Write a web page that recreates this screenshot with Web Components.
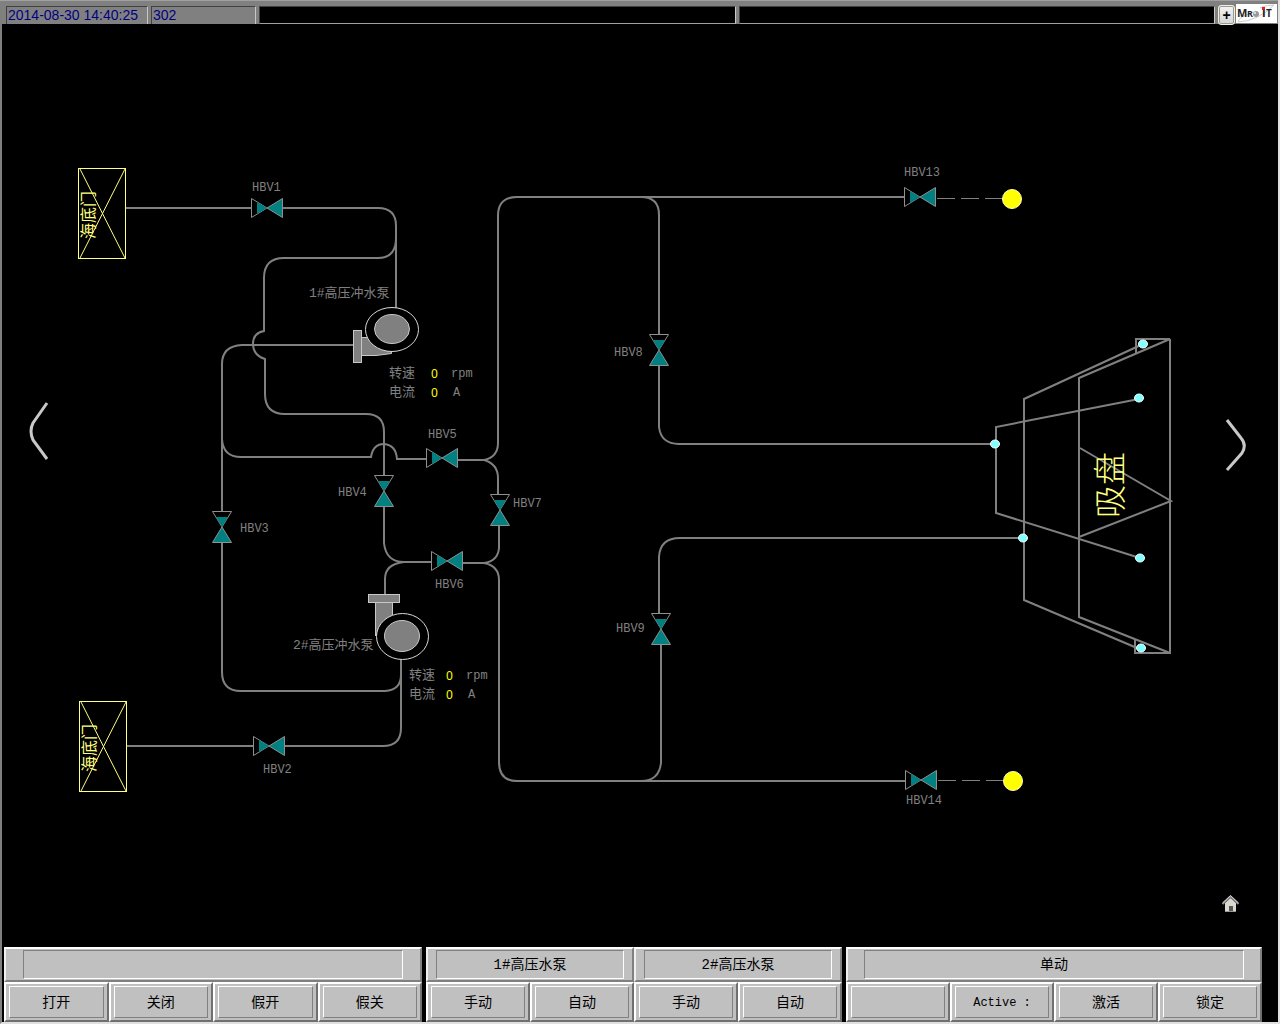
<!DOCTYPE html>
<html lang="zh-CN">
<head>
<meta charset="utf-8">
<title>高压冲水系统</title>
<style>
  html, body { margin: 0; height: 100%; background: #000; }
  body { font-family: "Liberation Mono", "Noto Sans CJK SC", monospace; font-size: 12px; }
</style>
</head>
<body>
<hmi-screen>
  <status-bar slot="top" time="2014-08-30 14:40:25" page="302"></status-bar>

  <mimic-canvas>
    <sea-chest x="78" y="168">海底门</sea-chest>
    <sea-chest x="79" y="701">海底门</sea-chest>

    <flow-valve x="267" y="208"></flow-valve>
    <flow-valve x="269" y="746"></flow-valve>
    <flow-valve x="222" y="527" vertical></flow-valve>
    <flow-valve x="384" y="491" vertical></flow-valve>
    <flow-valve x="442" y="458"></flow-valve>
    <flow-valve x="447" y="561"></flow-valve>
    <flow-valve x="500" y="510" vertical></flow-valve>
    <flow-valve x="659" y="350" vertical></flow-valve>
    <flow-valve x="661" y="629" vertical></flow-valve>
    <flow-valve x="920" y="197"></flow-valve>
    <flow-valve x="921" y="780"></flow-valve>

    <tag-label x="252" y="188">HBV1</tag-label>
    <tag-label x="263" y="770">HBV2</tag-label>
    <tag-label x="240" y="529">HBV3</tag-label>
    <tag-label x="338" y="493">HBV4</tag-label>
    <tag-label x="428" y="435">HBV5</tag-label>
    <tag-label x="435" y="585">HBV6</tag-label>
    <tag-label x="513" y="504">HBV7</tag-label>
    <tag-label x="614" y="353">HBV8</tag-label>
    <tag-label x="616" y="629">HBV9</tag-label>
    <tag-label x="904" y="173">HBV13</tag-label>
    <tag-label x="906" y="801">HBV14</tag-label>

    <tag-label x="309" y="294" kind="name">1#高压冲水泵</tag-label>
    <tag-label x="293" y="646" kind="name">2#高压冲水泵</tag-label>
    <pump-readout x="389" y="364" speed="0" current="0"></pump-readout>
    <pump-readout x="409" y="666" speed="0" current="0" tight></pump-readout>

    <tag-label x="1075" y="485" kind="suction">吸盘</tag-label>

    <nav-button x="28" y="401" label="上一页">
      <svg width="22" height="60"><path d="M19 2 L5 22 Q1 30 5 39 L19 58"/></svg>
    </nav-button>
    <nav-button x="1225" y="417" label="下一页">
      <svg width="22" height="56"><path d="M2 3 L16 21 Q22 28 17 36 L2 53"/></svg>
    </nav-button>
    <nav-button x="1221" y="894" label="主页">
      <svg width="19" height="19" viewBox="0 0 19 19">
        <path d="M4 9L9.500 4L15 9V18H4Z" fill="#dcd7d1" stroke="none"/>
        <path d="M1.500 10L9.500 2.500L17.500 10" stroke="#8a8a8a" stroke-width="2"/>
        <path d="M1.500 9L9.500 1.500L17.500 9" stroke="#d8d8d8" stroke-width="1"/>
        <rect x="8" y="12" width="4" height="6" fill="#5c5652" stroke="none"/>
        <rect x="4" y="17" width="11" height="1" fill="#999" stroke="none"/>
      </svg>
    </nav-button>
  </mimic-canvas>

  <control-deck slot="bottom">
    <control-group>
      <group-title slot="title"></group-title>
      <key-button>打开</key-button><key-button>关闭</key-button><key-button>假开</key-button><key-button>假关</key-button>
    </control-group>
    <control-group>
      <group-title slot="title">1#高压水泵</group-title><group-title slot="title">2#高压水泵</group-title>
      <key-button>手动</key-button><key-button>自动</key-button><key-button>手动</key-button><key-button>自动</key-button>
    </control-group>
    <control-group>
      <group-title slot="title">单动</group-title>
      <key-button></key-button><key-button small>Active :</key-button><key-button>激活</key-button><key-button>锁定</key-button>
    </control-group>
  </control-deck>
</hmi-screen>

<script>
  class Base extends HTMLElement {
    connectedCallback() {
      if (this.shadowRoot) return;
      const root = this.attachShadow({ mode: "open" });
      const t = document.createElement("template");
      t.innerHTML = this.render();
      root.append(t.content.cloneNode(true));
      if (this.hasAttribute("x")) {
        this.style.setProperty("--x", this.getAttribute("x"));
        this.style.setProperty("--y", this.getAttribute("y"));
      }
    }
  }
  // Nodes on the mimic share one coordinate system; its origin is (2, 24).
  const NODE = `position:absolute; left:calc((var(--x) - 2) * 1px); top:calc((var(--y) - 24) * 1px);`;

  customElements.define("hmi-screen", class extends Base {
    render() { return `
      <style>
        :host { display:flex; flex-direction:column; min-height:100vh; box-sizing:border-box;
          border-style:solid; border-width:0 2px 2px; border-color:#000 #e0e0e0 #e0e0e0 #808080; background:#000; }
        main { flex:1; display:flex; justify-content:center; overflow:hidden; }
      </style>
      <slot name="top"></slot><main><slot></slot></main><slot name="bottom"></slot>`; }
  });

  customElements.define("status-bar", class extends Base {
    render() { return `
      <style>
        :host { display:flex; gap:3px; height:24px; box-sizing:border-box; margin-left:-2px;
          padding:5px 1px 0 6px; background:#808080; border-top:1px solid #a0a0a0;
          font:14px/17px "Liberation Sans", sans-serif; color:#000080; }
        .cell { box-sizing:border-box; border-style:solid; border-width:1px 1px 0; border-color:#404040 #c8c8c8 #c8c8c8 #404040;
          padding-left:1px; white-space:nowrap; }
        .time { width:142px; }
        .page { width:105px; }
        .line { flex:1; background:#000; border-bottom:1px solid #a0a0a0; }
        button { width:17px; height:20px; margin-top:-1px; padding:0; border:1px solid #f4f0d8; border-radius:3px;
          background:linear-gradient(#f4f4f4,#d4d4d4); box-shadow:inset 0 0 0 1px #999; color:#000; font:bold 14px/16px "Liberation Sans", sans-serif; }
        svg { display:block; margin:-2px 0 0 -2px; }
      </style>
      <div class="cell time">${this.getAttribute("time")}</div>
      <div class="cell page">${this.getAttribute("page")}</div>
      <div class="cell line"></div>
      <div class="cell line"></div>
      <button type="button">+</button>
      <svg width="41" height="20" font-family="Open Sans" font-weight="bold">
        <rect width="41" height="19" fill="#fff"/>
        <path d="M2 18Q3 13 13 10M2 18Q22 17 38 1Q30 1 24 4" fill="none" stroke="#ccc"/>
        <text x="1" y="13" font-size="11" fill="#222">M</text>
        <text x="11" y="13" font-size="9" fill="#222">R</text>
        <circle cx="20" cy="10" r="3" fill="#999"/><circle cx="19" cy="9" r="1" fill="#eee"/>
        <text x="26" y="13" font-size="12" fill="#222">i</text>
        <rect x="26" y="3" width="3" height="3" fill="#e02020"/>
        <text x="30" y="13" font-size="10" fill="#222">T</text>
      </svg>`; }
  });

  customElements.define("mimic-canvas", class extends Base {
    render() {
      const dots = [[1143,344],[1139,398],[995,444],[1023,538],[1140,558],[1141,648]]
        .map(([x, y]) => `<ellipse cx="${x}" cy="${y}" rx="4.500" ry="4"/>`).join("");
      return `
      <style>
        :host { display:block; position:relative; flex:none; width:1276px; height:923px; }
        svg { display:block; width:100%; height:100%; }
        .pipe { fill:none; stroke:#808080; stroke-width:2; }
        .thin { fill:none; stroke:#808080; stroke-width:1; stroke-dasharray:18 6; }
        .body { fill:#808080; stroke:#c8c8c8; }
        .ring { fill:#000; stroke:#d8d8d8; }
        .dots { fill:#80ffff; stroke:#fff; }
        .lamp { fill:#ff0; stroke:#ffffb0; }
      </style>
      <svg viewBox="2 24 1276 923" aria-hidden="true">
        <g class="pipe">
          <path d="M126 208H251 M283 208H378Q396 208 396 226V308"/>
          <path d="M396 238Q396 258 378 258H284Q264 258 264 278V331Q253 333 253 344Q253 355 265 359V394Q265 414 285 414H366Q384 414 384 432V475"/>
          <path d="M353 345H242Q222 346 222 364V511 M222 541V672Q222 691 241 691H385Q401 690 401 675"/>
          <path d="M401 658V728Q401 746 383 746H285 M253 746H127"/>
          <path d="M222 439Q223 457 241 457H371Q373 444 384 444Q396 445 397 459H426"/>
          <path d="M458 460H484Q498 457 498 443V216Q498 197 517 197H904 M484 460Q498 464 498 478V494"/>
          <path d="M499 525V548Q498 561 484 563H463 M484 563Q499 566 499 580V762Q499 781 517 781H905"/>
          <path d="M384 506V543Q386 562 404 562H431 M404 562Q385 564 385 579V594"/>
          <path d="M641 197Q659 197 659 215V334 M659 364V427Q661 444 679 444H991"/>
          <path d="M661 644V763Q659 781 641 781 M660 613H659V557Q660 538 680 538H1019"/>
          <path d="M1170 339V653H1135V640 M1136 353V339H1170L1079 378V617L1170 653"/>
          <path d="M1143 344L1024 399V600L1137 648"/>
          <path d="M1139 399L996 427V513L1140 558"/>
          <path d="M1080 448L1171 501L1079 537"/>
        </g>
        <path class="thin" d="M937 198.500H1003 M938 780.500H1004"/>
        <circle class="lamp" cx="1012" cy="199" r="9.500"/>
        <circle class="lamp" cx="1013" cy="781" r="9.500"/>
        <g class="dots">${dots}</g>
        <g>
          <path class="body" d="M361.500 337.500H376L391.500 350V353.500L376 355.500H361.500Z"/>
          <rect class="body" x="353.500" y="330.500" width="8" height="32"/>
          <ellipse class="ring" cx="392" cy="329.500" rx="26.500" ry="22"/>
          <ellipse class="body" cx="392" cy="329" rx="17.500" ry="14.500"/>
        </g>
        <g>
          <path class="body" d="M375.500 602.500H392.500V616L375.500 636Z"/>
          <rect class="body" x="368.500" y="594.500" width="31" height="8"/>
          <ellipse class="ring" cx="402.500" cy="636.500" rx="26" ry="23"/>
          <ellipse class="body" cx="402" cy="636" rx="17.500" ry="15.500"/>
        </g>
      </svg>
      <slot></slot>`;
    }
  });

  customElements.define("flow-valve", class extends Base {
    render() { return `
      <style>
        :host { ${NODE} display:block; width:32px; height:20px; margin:-10px 0 0 -16px; }
        :host([vertical]) { transform:rotate(90deg); }
        svg { display:block; background:#000; }
        .o { stroke:#909090; fill:#000; } .t { fill:#008080; }
      </style>
      <svg width="32" height="20">
        <path class="o" d="M.500 .500L16 10L.500 19.500Z"/>
        <path class="t" d="M6 4L16 10L6 16Z"/>
        <path class="o t" style="fill:#008080" d="M31.500 .500L16 10L31.500 19.500Z"/>
      </svg>`; }
  });

  customElements.define("tag-label", class extends Base {
    render() { return `
      <style>
        :host { ${NODE} display:block; margin-top:-8px; line-height:16px; color:#808080; white-space:nowrap; }
        :host([kind="name"]) { font-size:13px; }
        :host([kind="suction"]) { margin-top:-20px; line-height:40px; font-size:33px; color:#ffff80; transform:rotate(-90deg);
          font-family:"Noto Sans CJK SC", sans-serif; font-weight:300; }
      </style><slot></slot>`; }
  });

  customElements.define("sea-chest", class extends Base {
    render() { return `
      <style>
        :host { ${NODE} display:flex; align-items:center; width:48px; height:91px; }
        svg { position:absolute; inset:0; fill:none; stroke:#ffff80; }
        span { writing-mode:vertical-rl; text-orientation:sideways; transform:rotate(180deg); margin-top:4px;
          font-size:16px; line-height:24px; color:#ffff80; }
      </style>
      <svg width="48" height="91"><rect x=".5" y=".5" width="47" height="90"/><path d="M2 1L47 90M47 1L2 90"/></svg>
      <span><slot></slot></span>`; }
  });

  customElements.define("pump-readout", class extends Base {
    render() { return `
      <style>
        :host { ${NODE} display:grid; grid-template-columns:42px 20px auto; line-height:19px; color:#808080; }
        :host([tight]) { grid-template-columns:37px 20px auto; }
        .n { font-size:13px; }
        .u { padding-top:2px; line-height:17px; }
        output { color:#ff0; font-family:"Noto Sans", sans-serif; }
        .c { padding-left:2px; }
      </style>
      <span class="n">转速</span><output>${this.getAttribute("speed")}</output><span class="u">rpm</span>
      <span class="n">电流</span><output>${this.getAttribute("current")}</output><span class="u c">A</span>`; }
  });

  customElements.define("nav-button", class extends Base {
    render() { return `
      <style>
        :host { ${NODE} display:block; }
        button { display:block; padding:0; border:0; background:none; cursor:pointer; }
        ::slotted(svg) { display:block; fill:none; stroke:#c8c8c8; stroke-width:3; }
      </style>
      <button type="button" aria-label="${this.getAttribute("label")}"><slot></slot></button>`; }
  });

  customElements.define("control-deck", class extends Base {
    render() { return `
      <style>
        :host { display:grid; grid-template-columns:418fr 416fr 416fr; gap:4px; padding:0 16px 0 2px; }
      </style><slot></slot>`; }
  });

  customElements.define("control-group", class extends Base {
    render() { return `
      <style>
        :host { display:flex; flex-direction:column; background:#c0c0c0; }
        div { display:flex; }
        ::slotted(*) { flex:1 1 0; min-width:0; }
      </style>
      <div><slot name="title"></slot></div><div><slot></slot></div>`; }
  });

  customElements.define("group-title", class extends Base {
    render() { return `
      <style>
        :host { display:block; box-sizing:border-box; height:35px; padding:1px 0;
          border:2px solid; border-color:#fff #808080 #808080 #f0f0f0; font-size:14px; line-height:29px; text-align:center; color:#000; }
        div { height:27px; margin:0 4%; border:1px solid; border-color:#808080 #fff #fff #808080; }
      </style><div><slot></slot></div>`; }
  });

  customElements.define("key-button", class extends Base {
    render() { return `
      <style>
        :host { display:block; height:40px; box-sizing:border-box; border:2px solid; border-color:#fff #707070 #707070 #fff; padding:2px 3px; }
        button { display:block; width:100%; height:100%; padding:2px 0 0; border:1px solid; border-color:#fff #808080 #808080 #fff;
          background:#c0c0c0; color:#000; font:14px/28px "Liberation Mono", "Noto Sans CJK SC", monospace; }
        :host([small]) button { font-size:12px; }
      </style><button type="button"><slot></slot></button>`; }
  });
</script>
</body>
</html>
